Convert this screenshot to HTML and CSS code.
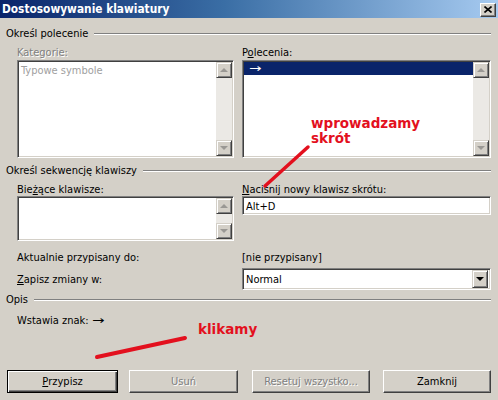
FILE: index.html
```html
<!DOCTYPE html>
<html lang="pl">
    <head>
        <meta charset="UTF-8">
        <meta name="viewport" content="width=device-width, initial-scale=1.0">
        <title>Dostosowywanie klawiatury</title>
        <link rel="stylesheet" href="styles.css">
    </head>
    <body>
        <div class="dialog">
            <div class="titlebar">
                <span class="title">Dostosowywanie klawiatury</span>
                <span class="close-btn">
                    <svg width="8" height="7" viewBox="0 0 8 7"><path d="M0.5 0.5 L7.5 6.5 M7.5 0.5 L0.5 6.5" stroke="#000" stroke-width="1.6"/></svg>
                </span>
            </div>

            <div class="content">
                <div class="group-head"><span>Określ polecenie</span><div class="etch"></div></div>
                <div class="cols">
                    <div class="col">
                        <div class="label disabled">Kategorie:</div>
                        <div class="listbox tall">
                            <div class="items">
                                <div class="item grey">Typowe symbole</div>
                            </div>
                            <div class="scrollbar">
                                <div class="sbtn"><span class="arr up off"></span></div>
                                <div class="track"></div>
                                <div class="sbtn"><span class="arr down off"></span></div>
                            </div>
                        </div>
                    </div>
                    <div class="col">
                        <div class="label">P<u>o</u>lecenia:</div>
                        <div class="listbox tall">
                            <div class="items">
                                <div class="item selected"><span class="arrow">→</span></div>
                            </div>
                            <div class="scrollbar">
                                <div class="sbtn"><span class="arr up off"></span></div>
                                <div class="track"></div>
                                <div class="sbtn"><span class="arr down off"></span></div>
                            </div>
                        </div>
                    </div>
                </div>

                <div class="group-head second"><span>Określ sekwencję klawiszy</span><div class="etch"></div></div>
                <div class="cols">
                    <div class="col">
                        <div class="label">Bie<u>ż</u>ące klawisze:</div>
                        <div class="listbox short">
                            <div class="items"></div>
                            <div class="scrollbar">
                                <div class="sbtn"><span class="arr up off"></span></div>
                                <div class="track"></div>
                                <div class="sbtn"><span class="arr down off"></span></div>
                            </div>
                        </div>
                    </div>
                    <div class="col">
                        <div class="label"><u>N</u>aciśnij nowy klawisz skrótu:</div>
                        <div class="textbox">Alt+D</div>
                    </div>
                </div>

                <div class="cols info-row">
                    <div class="col">Aktualnie przypisany do:</div>
                    <div class="col">[nie przypisany]</div>
                </div>
                <div class="cols combo-row">
                    <div class="col"><u>Z</u>apisz zmiany w:</div>
                    <div class="col">
                        <div class="combo">
                            <span class="combo-text">Normal</span>
                            <div class="sbtn"><span class="arr down"></span></div>
                        </div>
                    </div>
                </div>

                <div class="group-head third"><span>Opis</span><div class="etch"></div></div>
                <div class="desc">Wstawia znak: <span class="arrow">→</span></div>

                <div class="buttons">
                    <div class="button default b1"><u>P</u>rzypisz</div>
                    <div class="button disabled b2">Usuń</div>
                    <div class="button disabled b3">Resetuj wszystko...</div>
                    <div class="button b4">Zamknij</div>
                </div>
            </div>

            <!-- red notes drawn over the dialog -->
            <svg class="annot" width="498" height="400" viewBox="0 0 498 400">
                <line x1="308" y1="147" x2="265" y2="186" stroke="#e3101e" stroke-width="3.5" stroke-linecap="round"/>
                <line x1="185" y1="338" x2="97" y2="357" stroke="#e3101e" stroke-width="4" stroke-linecap="round"/>
            </svg>
            <div class="note note-shortcut">wprowadzamy<br>skrót</div>
            <div class="note note-click">klikamy</div>
        </div>
    </body>
</html>
```

FILE: styles.css
```css
:root {
    --face: #d4d0c8;
    --shadow: #808080;
    --dark: #404040;
}

html, body {
    margin: 0;
    padding: 0;
    width: 100%;
    height: 100%;
    overflow: hidden;
}

body {
    background: var(--face);
    font-family: "DejaVu Sans Condensed", "DejaVu Sans", sans-serif;
    font-size: 11px;
    color: #000;
}

.dialog {
    position: relative;
    width: 498px;
    height: 400px;
    background: var(--face);
}

.titlebar {
    height: 18px;
    display: flex;
    align-items: center;
    justify-content: space-between;
    padding: 0 2px 0 2px;
    background: linear-gradient(to right, #0a246a, #3a6ea5 45%, #a6caf0);
    color: #fff;
    font-weight: bold;
    font-size: 11.8px;
}

.close-btn {
    width: 14px;
    height: 12px;
    display: flex;
    align-items: center;
    justify-content: center;
    background: var(--face);
    border: 1px solid;
    border-color: #fff var(--dark) var(--dark) #fff;
    box-shadow: inset -1px -1px var(--shadow);
    margin-top: 1px;
}

.content {
    padding: 0 7px 0 6px;
}

.group-head {
    display: flex;
    align-items: center;
    height: 13px;
    line-height: 13px;
    margin-top: 9px;
}

.group-head span {
    padding-right: 6px;
}

.group-head.second {
    margin-top: 6px;
}

.group-head.third {
    margin-top: 3px;
}

.etch {
    flex: 1;
    height: 0;
    border-top: 1px solid var(--shadow);
    border-bottom: 1px solid #fff;
}

.cols {
    display: grid;
    grid-template-columns: 217px 249px;
    column-gap: 8px;
    padding-left: 11px;
}

.label {
    height: 13px;
    line-height: 13px;
    margin-top: 6px;
    margin-bottom: 1px;
}

.group-head.second + .cols .label {
    margin-bottom: 0;
}

.disabled {
    color: var(--shadow);
    text-shadow: 1px 1px #fff;
}

.listbox {
    display: flex;
    background: #fff;
    border: 1px solid;
    border-color: var(--shadow) #fff #fff var(--shadow);
    box-shadow: inset 1px 1px var(--dark), inset -1px -1px var(--face);
    padding: 1px;
    box-sizing: border-box;
}

.listbox.tall {
    height: 98px;
}

.listbox.short {
    height: 45px;
}

.items {
    flex: 1;
}

.item {
    height: 13px;
    line-height: 13px;
    padding-left: 2px;
}

.item.grey {
    color: #a0a0a0;
    padding-top: 2px;
}

.item.selected {
    background: #0a246a;
    color: #fff;
    padding-left: 5px;
}

.arrow {
    display: inline-block;
    transform: scaleX(1.5);
    transform-origin: left center;
}

.scrollbar {
    width: 16px;
    display: flex;
    flex-direction: column;
}

.track {
    flex: 1;
    background: #ebe9e5;
}

.sbtn {
    width: 14px;
    height: 14px;
    flex: none;
    display: flex;
    align-items: center;
    justify-content: center;
    background: var(--face);
    border: 1px solid;
    border-color: var(--face) var(--dark) var(--dark) var(--face);
    box-shadow: inset 1px 1px #fff, inset -1px -1px var(--shadow);
}

.arr {
    width: 0;
    height: 0;
    border-left: 4px solid transparent;
    border-right: 4px solid transparent;
}

.arr.up {
    border-bottom: 4px solid #000;
}

.arr.down {
    border-top: 4px solid #000;
}

.arr.up.off {
    border-bottom-color: #9a9894;
}

.arr.down.off {
    border-top-color: #9a9894;
}

.textbox {
    height: 19px;
    line-height: 17px;
    box-sizing: border-box;
    background: #fff;
    border: 1px solid;
    border-color: var(--shadow) #fff #fff var(--shadow);
    box-shadow: inset 1px 1px var(--dark), inset -1px -1px var(--face);
    padding: 1px 3px;
}

.info-row {
    margin-top: 10px;
    height: 13px;
    line-height: 13px;
}

.combo-row {
    margin-top: 4px;
    align-items: center;
}

.combo {
    height: 22px;
    box-sizing: border-box;
    display: flex;
    align-items: center;
    background: #fff;
    border: 1px solid;
    border-color: var(--shadow) #fff #fff var(--shadow);
    box-shadow: inset 1px 1px var(--dark), inset -1px -1px var(--face);
    padding: 2px;
}

.combo-text {
    flex: 1;
    padding-left: 1px;
}

.combo .sbtn {
    height: 16px;
}

.desc {
    margin-top: 8px;
    padding-left: 11px;
    height: 13px;
    line-height: 13px;
}

.buttons {
    display: flex;
    margin-top: 43px;
    padding-left: 1px;
}

.button {
    height: 23px;
    box-sizing: border-box;
    display: flex;
    align-items: center;
    justify-content: center;
    border: 1px solid;
    border-color: #fff var(--dark) var(--dark) #fff;
    box-shadow: inset -1px -1px var(--shadow);
}

.button.default {
    border-color: #000;
    box-shadow: inset 1px 1px #fff, inset -1px -1px var(--dark), inset -2px -2px var(--shadow);
}

.b1 { width: 111px; }
.b2 { width: 109px; margin-left: 11px; }
.b3 { width: 118px; margin-left: 14px; }
.b4 { width: 108px; margin-left: 13px; }

.annot {
    position: absolute;
    left: 0;
    top: 0;
    pointer-events: none;
}

.note {
    position: absolute;
    color: #e3101e;
    font-family: "DejaVu Sans", sans-serif;
    font-weight: bold;
    font-size: 13.5px;
    line-height: 15px;
}

.note-shortcut {
    left: 311px;
    top: 116px;
}

.note-click {
    left: 198px;
    top: 322px;
}
```
